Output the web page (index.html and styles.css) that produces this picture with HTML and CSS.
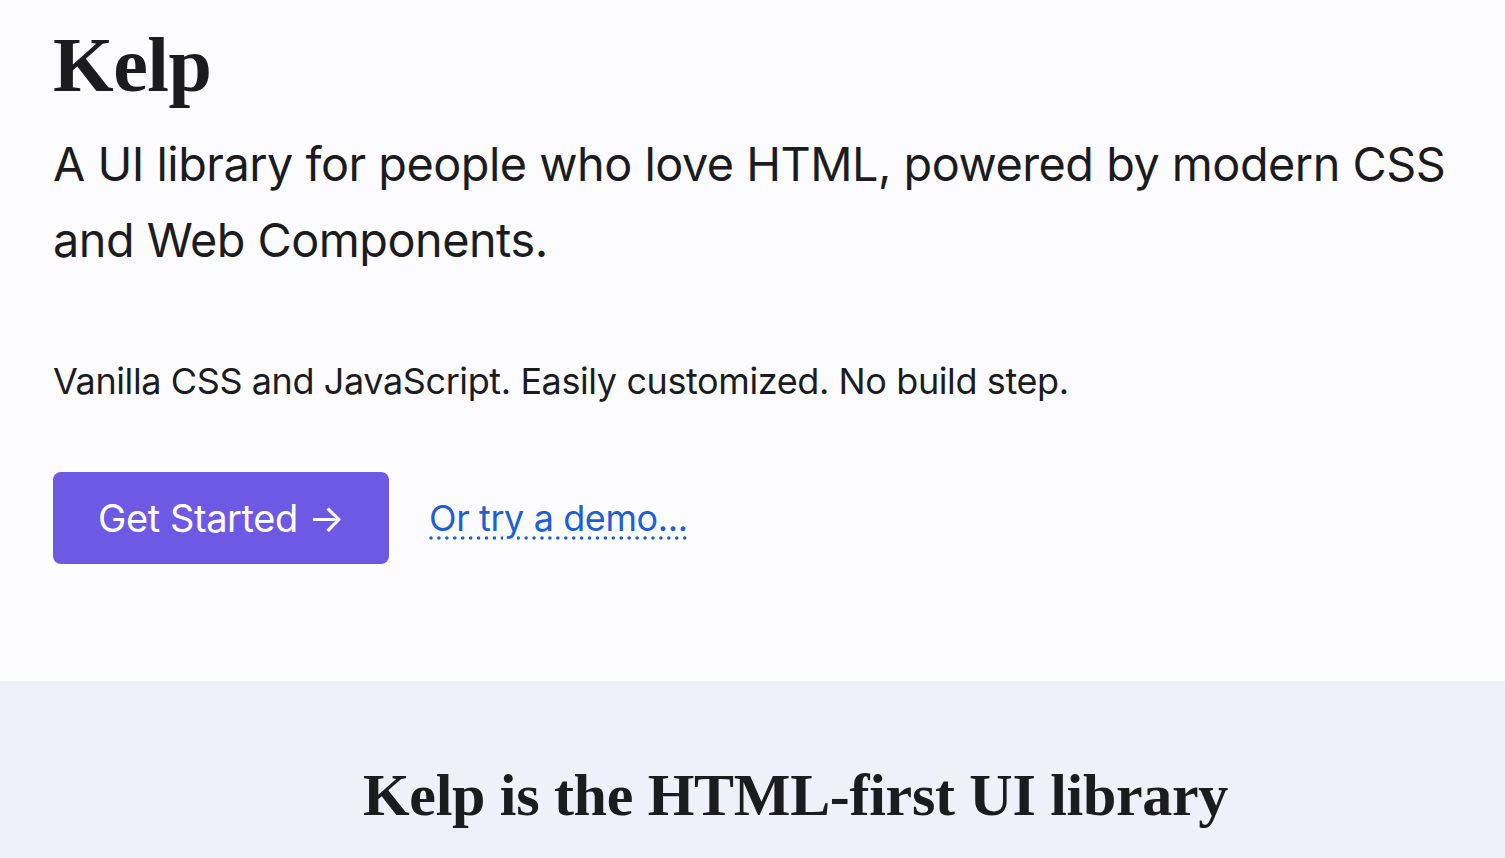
FILE: index.html
```html
<!DOCTYPE html>
<html lang="en">
<head>
<meta charset="utf-8">
<title>Kelp</title>
<link rel="stylesheet" href="styles.css">
</head>
<body>
<header class="hero">
  <h1 class="hero-title">Kelp</h1>
  <p class="hero-lead">A UI library for people who love HTML, powered by modern CSS and Web Components.</p>
  <p class="hero-note">Vanilla CSS and JavaScript. Easily customized. No build step.</p>
  <div class="hero-actions">
    <a class="btn-primary" href="#">Get Started →</a>
    <a class="demo-link" href="#">Or try a demo...</a>
  </div>
</header>
<section class="intro">
  <h2 class="intro-title">Kelp is the HTML-first UI library</h2>
</section>
</body>
</html>
```
FILE: styles.css
```css
* { box-sizing: border-box; }
html, body { margin: 0; padding: 0; }
body {
  background: #fcfcfe;
  color: #1c1c1f;
  font-family: Inter, "Noto Sans", sans-serif;
}
.hero {
  padding: 20px 53px 0;
  height: 681px;
}
.hero-title {
  margin: 0;
  font-family: "Liberation Serif", "Times New Roman", serif;
  font-weight: bold;
  font-size: 78px;
  line-height: 90px;
  letter-spacing: -0.5px;
}
.hero-lead {
  margin: 16px 0 0;
  font-size: 46.8px;
  line-height: 76px;
  letter-spacing: -0.5px;
  max-width: 1420px;
}
.hero-note {
  margin: 78px 0 0;
  font-size: 36px;
  line-height: 50px;
  letter-spacing: -0.4px;
}
.hero-actions {
  margin-top: 66px;
  display: flex;
  align-items: center;
  gap: 40px;
}
.btn-primary {
  display: inline-flex;
  align-items: center;
  justify-content: center;
  width: 336px;
  height: 92px;
  background: #6e59e4;
  border-radius: 8px;
  color: #fff;
  font-size: 38px;
  text-decoration: none;
  letter-spacing: -0.4px;
}
.demo-link {
  color: #1f5fd4;
  font-size: 36px;
  letter-spacing: -0.4px;
  text-decoration: underline dotted;
  text-underline-offset: 6px;
}
.intro {
  background: #f0f0fb;
  height: 177px;
  padding: 79px 0 0 86px;
  text-align: center;
}
.intro-title {
  margin: 0;
  font-family: "Liberation Serif", "Times New Roman", serif;
  font-weight: bold;
  font-size: 60px;
  line-height: 70px;
  letter-spacing: -0.3px;
}
```
